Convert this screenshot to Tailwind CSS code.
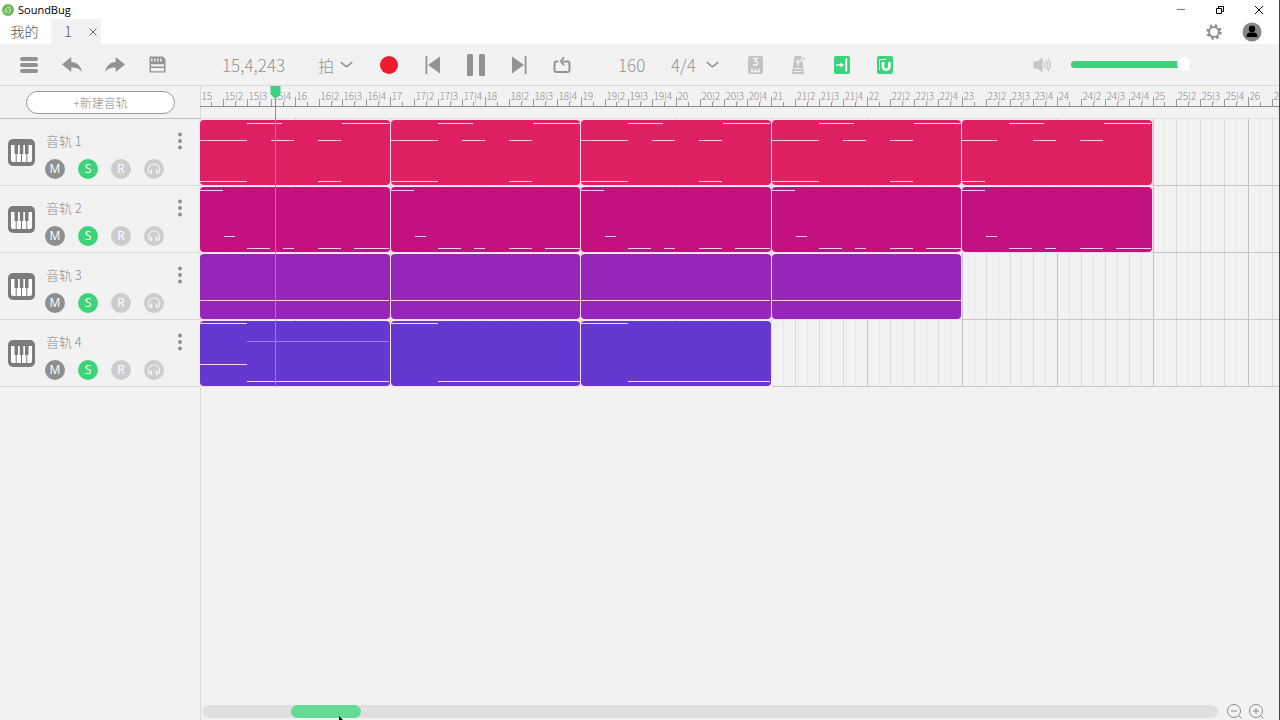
<!DOCTYPE html>
<html lang="zh-CN">
<head>
<meta charset="utf-8">
<title>SoundBug</title>
<script src="https://cdn.jsdelivr.net/npm/@tailwindcss/browser@4"></script>
</head>
<body class="bg-[#f2f2f2] font-['Noto_Sans_CJK_SC',sans-serif] font-light text-[#808080]">
<div class="flex h-screen flex-col overflow-hidden border-r border-[#444]">

  <header class="bg-white">
    <div class="flex h-[19px] items-center">
      <svg class="ml-[2px] size-[12px]" viewBox="0 0 12 12"><circle cx="6" cy="6" r="6" fill="#6cb85a"/><path d="M3 8.500C2.500 5.500 5 2.500 7.500 3C9 5 8.500 8 6.500 9.500M4.500 9C4.300 7 5.300 5.500 6.500 5.500" fill="none" stroke="#d3f0c4" stroke-width="1"/></svg>
      <span class="ml-[4px] font-['Open_Sans','Noto_Sans',sans-serif] text-[11px] font-normal leading-[19px] text-black">SoundBug</span>
      <div class="ml-auto mr-[1px] flex text-black">
        <button aria-label="最小化" class="flex h-[19px] w-[39px] items-center justify-center"><svg class="size-[10px]" viewBox="0 0 10 10"><path d="M1 4.500h8" stroke="#777" stroke-width="1"/></svg></button>
        <button aria-label="还原" class="flex h-[19px] w-[39px] items-center justify-center"><svg class="size-[10px]" viewBox="0 0 10 10" fill="none" stroke="currentColor"><path d="M1.500 3.500h5v5h-5zM3.500 3.500v-2h5v5h-2"/></svg></button>
        <button aria-label="关闭" class="flex h-[19px] w-[39px] items-center justify-center"><svg class="size-[10px]" viewBox="0 0 10 10" fill="none" stroke="currentColor"><path d="M1 1l8 8M9 1l-8 8"/></svg></button>
      </div>
    </div>
    <nav class="flex h-[25px] items-center text-[14px] text-[#555]">
      <button class="w-[51px] pr-[2px] leading-[25px]">我的</button>
      <div class="flex h-full w-[50px] items-center bg-[#f2f2f2]">
        <button class="w-[34px] leading-[25px]">1</button>
        <button aria-label="关闭标签" class="flex w-[16px] justify-center"><svg class="size-[8px]" viewBox="0 0 8 8" stroke="#666" fill="none"><path d="M0.500 0.500l7 7M7.500 0.500l-7 7"/></svg></button>
      </div>
      <button aria-label="设置" class="ml-auto"><svg class="size-[16px]" viewBox="0 0 16 16"><circle cx="8" cy="8" r="6.500" fill="none" stroke="#8c8c8c" stroke-width="2.400" stroke-dasharray="2.500 2.605"/><circle cx="8" cy="8" r="4.900" fill="#fff" stroke="#8c8c8c" stroke-width="1.900"/></svg></button>
      <button aria-label="用户" class="ml-[20px] mr-[17px]"><svg class="size-[20px]" viewBox="0 0 20 20"><circle cx="10" cy="10" r="9.500" fill="#858585"/><circle cx="10" cy="7" r="3.200" fill="#000"/><path d="M4.500 15c0-3.200 1.800-4.500 3.300-4.500h4.400c1.500 0 3.300 1.300 3.300 4.500z" fill="#000"/></svg></button>
    </nav>
  </header>

  <div class="flex h-[42px] items-center border-b border-[#d9d9d9] pl-[7px] text-[#939393]">
    <button aria-label="菜单" class="flex w-[43px] justify-center"><svg class="h-[18px] w-[18px]" viewBox="0 0 18 18" stroke="currentColor" stroke-width="4" stroke-linecap="round"><path d="M2 3h14M2 9h14M2 15h14"/></svg></button>
    <button aria-label="撤销" class="flex w-[43px] justify-center"><svg class="h-[18px] w-[20px]" viewBox="0 0 20 18" fill="currentColor"><path d="M0 8.500L9.300 1v4.800c6 .6 9.700 4.500 10.700 10.200-2.400-3.300-5.800-4.700-10.700-4.600V16z"/></svg></button>
    <button aria-label="重做" class="flex w-[43px] justify-center"><svg class="h-[18px] w-[20px]" viewBox="0 0 20 18" fill="currentColor"><path d="M20 8.500L10.700 1v4.800C4.700 6.400 1 10.300 0 16c2.400-3.300 5.800-4.700 10.700-4.600V16z"/></svg></button>
    <button aria-label="保存" class="flex w-[43px] justify-center"><svg class="size-[17px]" viewBox="0 0 17 17"><path d="M2 .5h12l2.500 2.500v13.500H.5V.5z" fill="currentColor"/><path d="M2.800 2.500v3M5.800 2.500v3M8.800 2.500v3M11.800 2.500v3" stroke="#f2f2f2" stroke-width="1.400"/><path d="M2 8.200h13v2.200H2zM2 12h13v3.200H2z" fill="#f2f2f2"/></svg></button>
    <output class="ml-[43px] w-[96px] text-[17px] leading-[41px]">15,4,243</output>
    <label class="relative flex w-[49px] items-center">
      <select aria-label="时间单位" class="w-full appearance-none text-[16px] leading-[32px]"><option>拍</option></select>
      <svg class="pointer-events-none absolute left-[22px] h-[7px] w-[13px]" viewBox="0 0 13 7" fill="none" stroke="currentColor" stroke-width="1.600"><path d="M.8 1l4 3.600q1.700 1.400 3.400 0l4-3.600"/></svg>
    </label>
    <button aria-label="录音" class="flex w-[44px] justify-center"><span class="size-[18px] rounded-full bg-[#ed1b2e]"></span></button>
    <button aria-label="上一小节" class="flex w-[43px] justify-center"><svg class="h-[18px] w-[16px]" viewBox="0 0 16 18" fill="currentColor"><path d="M.5 0h1.800v18H.5zM15 .5v17L3 9z"/></svg></button>
    <button aria-label="暂停" class="flex w-[43px] justify-center"><svg class="h-[22px] w-[18px]" viewBox="0 0 18 22" fill="currentColor"><rect width="6" height="22" rx="1.500"/><rect x="12" width="6" height="22" rx="1.500"/></svg></button>
    <button aria-label="下一小节" class="flex w-[43px] justify-center"><svg class="h-[18px] w-[16px]" viewBox="0 0 16 18" fill="currentColor"><path d="M13.700 0h1.800v18h-1.800zM1 .5v17L13 9z"/></svg></button>
    <button aria-label="循环" class="flex w-[43px] justify-center"><svg class="h-[18px] w-[18px]" viewBox="0 0 18 18" fill="none" stroke="currentColor" stroke-width="2"><path d="M5.200 5.500H3.500a2 2 0 0 0-2 2v6.500a2 2 0 0 0 2 2h11a2 2 0 0 0 2-2V7.500a2 2 0 0 0-2-2H9.500"/><path d="M11 1.300L7.800 5.200l3.200 3.900" stroke-width="1.800"/></svg></button>
    <output class="ml-[35px] w-[53px] text-[17px] leading-[41px]">160</output>
    <label class="relative flex w-[63px] items-center">
      <select aria-label="拍号" class="w-full appearance-none text-[17px] leading-[32px]"><option>4/4</option></select>
      <svg class="pointer-events-none absolute left-[35px] h-[7px] w-[13px]" viewBox="0 0 13 7" fill="none" stroke="currentColor" stroke-width="1.600"><path d="M.8 1l4 3.600q1.700 1.400 3.400 0l4-3.600"/></svg>
    </label>
    <button aria-label="预备拍" class="flex w-[43px] justify-center"><svg class="h-[18px] w-[15px]" viewBox="0 0 15 18"><rect width="15" height="18" rx="2" fill="#c3c3c3"/><path d="M5 2.500h4.200L7.200 5.200c3 0 3 4 .2 4q-1.600 0-2.400-1M3 15.500h9M4 15v-2.500M7.500 15v-2.500M11 15v-2.500" fill="none" stroke="#f4f4f4" stroke-width="1.400"/></svg></button>
    <button aria-label="节拍器" class="flex w-[43px] justify-center"><svg class="h-[18px] w-[15px]" viewBox="0 0 15 18"><path d="M3.500 0h7l2.500 18H1z" fill="#c3c3c3"/><path d="M7 3v7M5.500 5l1.500 2 5-4.500M3.300 12.500h7.400M2.800 15.500h8.600" fill="none" stroke="#f2f2f2" stroke-width="1.200"/><path d="M12 3.500l2-2" stroke="#c3c3c3" stroke-width="1.500"/></svg></button>
    <button aria-label="跟随播放" class="flex w-[43px] justify-center"><svg class="h-[18px] w-[16px]" viewBox="0 0 16 18"><rect width="16" height="18" rx="2" fill="#3dd37d"/><path d="M2 9h6" stroke="#fff" stroke-width="1.300"/><path d="M6.500 6.500L10 9l-3.500 2.500z" fill="#fff"/><path d="M12.300 2.500v13" stroke="#fff" stroke-width="1.800"/></svg></button>
    <button aria-label="吸附" class="flex w-[43px] justify-center"><svg class="h-[18px] w-[16px]" viewBox="0 0 16 18"><rect width="16" height="18" rx="2" fill="#3dd37d"/><path d="M2.500 14V3.500H9" fill="none" stroke="#fff" stroke-width="1"/><path d="M6 6v4.500a3.200 3.200 0 0 0 6.400 0V6" fill="none" stroke="#fff" stroke-width="2.600"/></svg></button>
    <svg class="ml-auto h-[14px] w-[18px]" viewBox="0 0 18 14" fill="none" stroke="#c6c6c6" stroke-width="1.300"><path d="M1 4h3.500L9 .8v12.400L4.500 10H1z" fill="#c6c6c6"/><path d="M11 4.300q2 2.700 0 5.400M13 2.500q3.600 4.500 0 9M15 1q4.500 6 0 12"/></svg>
    <input type="range" aria-label="音量" min="0" max="100" value="100" class="ml-[20px] mr-[88px] h-[14px] w-[120px] appearance-none bg-transparent [&::-webkit-slider-runnable-track]:h-[7px] [&::-webkit-slider-runnable-track]:rounded-full [&::-webkit-slider-runnable-track]:bg-[#3fd07d] [&::-webkit-slider-thumb]:-mt-[4px] [&::-webkit-slider-thumb]:size-[14px] [&::-webkit-slider-thumb]:appearance-none [&::-webkit-slider-thumb]:rounded-full [&::-webkit-slider-thumb]:bg-white">
  </div>

  <div class="flex min-h-0 flex-1">
    <aside class="w-[200px] shrink-0">
      <div class="flex h-[33px] items-center border-b border-[#bdbdbd] pl-[26px]">
        <button class="h-[23px] w-[149px] rounded-full border border-[#999] bg-white text-[12px] leading-[22px] text-[#888]">+新建音轨</button>
      </div>
      <ul id="tracks"></ul>
    </aside>

    <main class="relative flex min-w-0 flex-1 flex-col">
      <div class="absolute inset-y-0 left-0 w-px bg-[#d9d9d9]"></div>
      <div class="relative overflow-hidden">
        <svg id="ruler" class="block h-[21px] w-full border-b border-[#8f8f8f]"></svg>
        <div class="relative mt-[11px] border-t border-[#e0e0e0]">
          <svg id="grid" class="absolute inset-0 h-full w-full"></svg>
          <div id="lanes" class="relative"></div>
        </div>
        <div class="absolute inset-y-0 left-[70px] flex w-[11px] flex-col items-center">
          <svg class="h-[13px] w-[11px] shrink-0" viewBox="0 0 11 13"><path d="M.5 0h10v7.500q0 1.500-5 5-5-3.500-5-5z" fill="#3dd37d"/></svg>
          <div class="w-px flex-1 bg-[#45b585]"></div>
        </div>
      </div>
      <div class="mt-auto flex h-[17px] items-center gap-[5px] pl-[2px] pr-[14px]">
        <div role="scrollbar" aria-label="时间轴滚动" aria-controls="lanes" aria-valuenow="9" class="relative mr-[3px] flex h-[13px] flex-1 rounded-full bg-[#e0e0e0]">
          <div class="ml-[89px] h-[13px] w-[70px] rounded-full bg-[#65d996]"></div>
          <svg class="absolute left-[137px] top-[11px] h-[4px] w-[4px]" viewBox="0 0 4 4"><path d="M0 0l4 4H0z" fill="#000"/></svg>
        </div>
        <button aria-label="缩小"><svg class="block size-[17px]" viewBox="0 0 17 17" fill="none" stroke="#8c8c8c" stroke-width="1"><circle cx="8" cy="8" r="6.500"/><path d="M5 8h6M12.500 12.500l3 3"/></svg></button>
        <button aria-label="放大"><svg class="block size-[17px]" viewBox="0 0 17 17" fill="none" stroke="#8c8c8c" stroke-width="1"><circle cx="8" cy="8" r="6.500"/><path d="M5 8h6M8 5v6M12.500 12.500l3 3"/></svg></button>
      </div>
    </main>
  </div>
</div>

<script>
const BAR = 95.3, BEAT = BAR / 4, CLIP = BAR * 2;
// Each note is [row offset, start beat, end beat, colour].
const W = '#ffd3e6';
const drums = [[3,2,3.5],[3,6,8],[20,0,2],[20,3,4],[20,5,6],[61,0,2],[61,5,6]];
const drumsEnd = [[3,2,3.5],[3,6,8],[20,0,1.5],[20,3,4],[20,5,6],[61,0,1]];
const lead = [[3,0,1],[49,1,1.5],[61,2,3],[61,3.5,4],[61,5,6],[61,6.5,8]];
const pad = [[46,0,8]];
const bassIntro = [[2,0,2],[20,2,8,'#a07cf0'],[43,0,2],[60,2,8]];
const bass = [[2,0,2],[60,2,8]];
const tracks = [
  { name: '音轨 1', color: '#df2163', clips: [drums, drums, drums, drums, drumsEnd] },
  { name: '音轨 2', color: '#c3127f', clips: [lead, lead, lead, lead, lead] },
  { name: '音轨 3', color: '#9626bb', clips: [pad, pad, pad, pad] },
  { name: '音轨 4', color: '#6439d2', clips: [bassIntro, bass, bass] }
];

document.getElementById('tracks').innerHTML = tracks.map(t => `
  <li class="flex h-[67px] items-start border-b border-[#d9d9d9] pl-[8px]">
    <svg class="mt-[20px] size-[27px] shrink-0" viewBox="0 0 27 27"><rect width="27" height="27" rx="5" fill="#7c7c7c"/><path d="M3 6h21v15q0 2-2 2H5q-2 0-2-2z" fill="#fff"/><path d="M8.200 6v17M13.500 6v17M18.800 6v17" stroke="#7c7c7c" stroke-width="1"/><path d="M6.500 6h3.500v9H6.500zM11.800 6h3.500v9h-3.500zM17 6h3.500v9H17z" fill="#7c7c7c"/></svg>
    <div class="ml-[10px] flex-1">
      <div class="mt-[12px] flex h-[20px] items-center justify-between pl-px pr-[18px]">
        <span class="text-[13px] leading-[20px] text-[#8c8c8c]">${t.name}</span>
        <button aria-label="${t.name} 更多"><svg class="block h-[18px] w-[4px]" viewBox="0 0 4 18" fill="#8c8c8c"><circle cx="2" cy="2.500" r="1.900"/><circle cx="2" cy="9" r="1.900"/><circle cx="2" cy="15.500" r="1.900"/></svg></button>
      </div>
      <div class="mt-[8px] flex gap-[13px] font-['Open_Sans','Noto_Sans',sans-serif] text-[12px] font-normal text-white">
        <button aria-label="静音" class="size-[20px] rounded-full bg-[#8f8f8f] leading-[20px]">M</button>
        <button aria-label="独奏" class="size-[20px] rounded-full bg-[#3dd37d] leading-[20px]">S</button>
        <button aria-label="录音" class="size-[20px] rounded-full bg-[#cdcdcd] leading-[20px]">R</button>
        <button aria-label="监听" class="flex size-[20px] items-center justify-center rounded-full bg-[#cdcdcd]"><svg class="size-[14px]" viewBox="0 0 14 14" fill="none" stroke="#f5f5f5"><path d="M2.500 11.500C-.5 6 3 2 7 2s7.500 4 4.500 9.500" stroke-width="1.100"/><path d="M4.300 7.500v4.500M9.700 7.500v4.500" stroke-width="1.800"/></svg></button>
      </div>
    </div>
  </li>`).join('');

document.getElementById('lanes').innerHTML = tracks.map(t => `
  <div class="flex h-[67px] border-b border-[#c8c8c8] pt-px">${t.clips.map(notes => `
    <div class="h-[66px] shrink-0 overflow-hidden border-b border-r border-[#ffd9ec] bg-[#ffd9ec]" style="width:${CLIP}px">
      <svg class="block h-[65px] w-full rounded-[4px]" viewBox="0 0 80 65" preserveAspectRatio="none" shape-rendering="crispEdges" style="background:${t.color}">${notes.map(([y, a, b, c]) =>
        `<rect x="${a * 10}" y="${y}" width="${(b - a) * 10 - 0.3}" height="1" fill="${c || W}"/>`).join('')}</svg>
    </div>`).join('')}
  </div>`).join('');

let ruler = '', grid = '';
for (let i = 0; i < 92; i++) {
  const x = Math.floor(i * BEAT / 2) + 0.5;
  const bar = 15 + Math.floor(i / 8), beat = Math.floor(i % 8 / 2) + 1;
  const isBar = i % 8 === 0, isBeat = i % 2 === 0;
  if (i) ruler += `<path d="M${x} ${isBar ? 11 : isBeat ? 13 : 16}V21" stroke="#9a9a9a"/>`;
  if (isBeat) ruler += `<text x="${x + 1}" y="14" font-size="10" fill="#8c8c8c">${isBar ? bar : bar + '|' + beat}</text>`;
  if (i) grid += `<path d="M${x} 0V268" stroke="${isBar ? '#c2c2c2' : isBeat ? '#dadada' : '#e6e6e6'}"/>`;
}
document.getElementById('ruler').innerHTML = ruler;
document.getElementById('grid').innerHTML = grid;
</script>
</body>
</html>
